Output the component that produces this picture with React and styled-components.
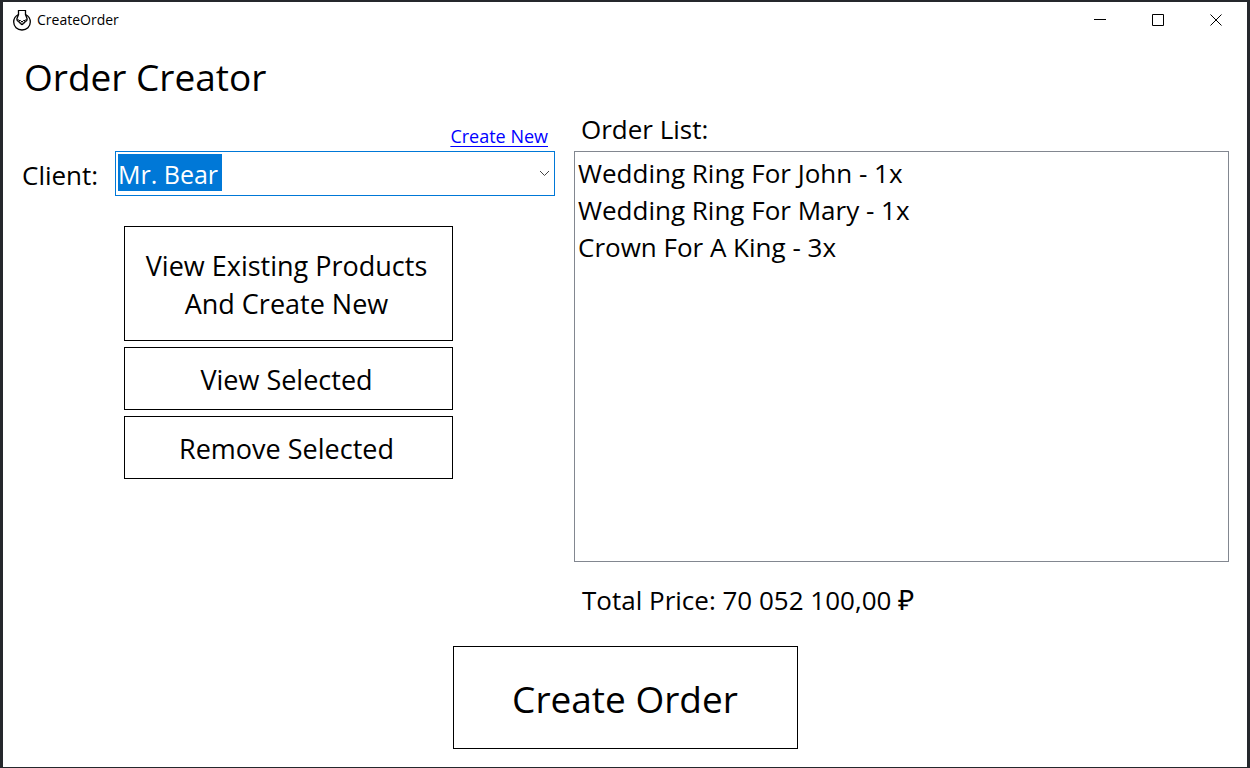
import React, { useState } from "react";
import styled, { createGlobalStyle } from "styled-components";

const GlobalStyle = createGlobalStyle`
  * { box-sizing: border-box; }
  body {
    margin: 0;
    background: #25282c;
    color: #000;
    font-family: "Open Sans", "Noto Sans", sans-serif;
    font-size: 26px;
    line-height: 37px;
  }
`;

const Desktop = styled.div`
  display: flex;
  min-height: 100vh;
  padding: 2px 3px 1px;
`;

const Window = styled.div`
  flex: 1;
  display: flex;
  flex-direction: column;
  background: #fff;
`;

const TitleBar = styled.header`
  display: flex;
  align-items: center;
  height: 36px;
  padding: 0 2px 0 10px;
  font-size: 14px;
  line-height: 20px;
`;

const AppName = styled.span`
  flex: 1;
  padding-left: 6px;
`;

const WindowButton = styled.button`
  display: flex;
  align-items: center;
  justify-content: center;
  width: 58px;
  height: 36px;
  padding: 0;
  border: 0;
  background: transparent;
  &:hover { background: #e5e5e5; }
`;

const Heading = styled.h1`
  margin: 12px 0 0;
  padding-left: 21px;
  font-size: 37px;
  font-weight: 400;
  line-height: 54px;
`;

const Content = styled.main`
  display: grid;
  grid-template-columns: 552px minmax(0, 1fr);
  column-gap: 19px;
  flex: 1;
  padding-right: 18px;
`;

const Column = styled.section`
  display: flex;
  flex-direction: column;
`;

const LinkRow = styled.div`
  display: flex;
  justify-content: flex-end;
  height: 47px;
  padding: 18px 7px 0 0;
`;

const CreateLink = styled.a`
  color: #0000ff;
  font-size: 18px;
  line-height: 28px;
  text-decoration-thickness: 1px;
  text-underline-offset: 3px;
`;

const Field = styled.div`
  display: flex;
  align-items: center;
`;

const FieldLabel = styled.label`
  width: 112px;
  padding: 4px 0 0 19px;
`;

const ComboBox = styled.div`
  display: grid;
  flex: 1;
  align-items: center;
  > * { grid-area: 1 / 1; }
  > svg { justify-self: end; margin-right: 5px; pointer-events: none; }
`;

const ComboSelect = styled.select`
  appearance: none;
  width: 100%;
  height: 45px;
  padding: 2px 24px 0 2px;
  border: 1px solid #0078d7;
  border-radius: 0;
  outline: 0;
  background: linear-gradient(#0078d7, #0078d7) 2px 2px / 104px 37px no-repeat #fff;
  color: #fff;
  font: inherit;
  font-size: 25px;
  option { color: #000; }
`;

const Actions = styled.div`
  display: flex;
  flex-direction: column;
  gap: 6px;
  width: 329px;
  margin: 30px 0 0 121px;
`;

const Button = styled.button`
  padding: 13px 20px 11px 16px;
  border: 1px solid #000;
  background: #fff;
  color: #000;
  font: inherit;
  font-size: 27px;
  &:hover { background: #f2f2f2; }
`;

const TallButton = styled(Button)`
  padding-top: 20px;
  padding-bottom: 17px;
  line-height: 38px;
`;

const ListTitle = styled.h2`
  height: 47px;
  margin: 0;
  padding: 7px 0 0 7px;
  font-size: inherit;
  font-weight: 400;
`;

const OrderList = styled.ul`
  flex: 1;
  min-height: 300px;
  margin: 0;
  padding: 3px;
  border: 1px solid #828790;
  list-style: none;
`;

const Total = styled.p`
  margin: 0;
  padding: 20px 0 0 8px;
`;

const Currency = styled.span`
  font-family: "Liberation Sans", sans-serif;
  font-size: 28px;
`;

const Footer = styled.footer`
  display: flex;
  justify-content: center;
  padding: 27px 0 18px;
`;

const CreateButton = styled(Button)`
  width: 345px;
  padding: 24px 20px 22px;
  font-size: 37px;
  line-height: 55px;
`;

const items = [
  "Wedding Ring For John - 1x",
  "Wedding Ring For Mary - 1x",
  "Crown For A King - 3x",
];

function NecklaceIcon() {
  return (
    <svg width="18" height="22" viewBox="0 0 18 22" fill="none" stroke="#000" aria-hidden="true">
      <path d="M5 1.500h8" />
      <path d="M5.500 1v4.500C2.500 7 .7 9.500.7 13c0 4.500 3.500 8 8.300 8s8.300-3.500 8.300-8c0-3.500-1.800-6-4.800-7.500V1" strokeWidth="1.300" />
      <path d="M5.500 5.500L4 9.500M12.500 5.500L14 9.500" strokeWidth="1.300" />
      <path d="M4 9.500l2 2h1.500L9 13l1.500-1.500H12l2-2" />
      <path d="M4 9.500c-.4 1.800.5 2.800 2 2.800 0 1.400.8 1.900 1.700 1.700.2 1 .6 1.600 1.300 1.600s1.100-.6 1.300-1.600c.9.2 1.700-.3 1.700-1.700 1.500 0 2.400-1 2-2.800" strokeWidth="1.300" />
    </svg>
  );
}

function Glyph({ d, label }) {
  return (
    <WindowButton type="button" aria-label={label}>
      <svg width="12" height="12" viewBox="0 0 12 12" fill="none" stroke="#000">
        <path d={d} />
      </svg>
    </WindowButton>
  );
}

export default function App() {
  const [client, setClient] = useState("Mr. Bear");
  return (
    <>
      <GlobalStyle />
      <Desktop>
        <Window>
          <TitleBar>
            <NecklaceIcon />
            <AppName>CreateOrder</AppName>
            <Glyph label="Minimize" d="M0 5.5h12" />
            <Glyph label="Maximize" d="M.5.5h11v11H.5z" />
            <Glyph label="Close" d="M.5.5l11 11M11.500.5l-11 11" />
          </TitleBar>
          <Heading>Order Creator</Heading>
          <Content>
            <Column>
              <LinkRow>
                <CreateLink href="#new-client">Create New</CreateLink>
              </LinkRow>
              <Field>
                <FieldLabel htmlFor="client">Client:</FieldLabel>
                <ComboBox>
                  <ComboSelect id="client" value={client} onChange={(e) => setClient(e.target.value)}>
                    <option>Mr. Bear</option>
                  </ComboSelect>
                  <svg width="11" height="7" viewBox="0 0 11 7" fill="none" stroke="#444" aria-hidden="true">
                    <path d="M1 1l4.500 4.500L10 1" />
                  </svg>
                </ComboBox>
              </Field>
              <Actions>
                <TallButton type="button">View Existing Products And Create New</TallButton>
                <Button type="button">View Selected</Button>
                <Button type="button">Remove Selected</Button>
              </Actions>
            </Column>
            <Column>
              <ListTitle>Order List:</ListTitle>
              <OrderList aria-label="Order List">
                {items.map((item) => (
                  <li key={item}>{item}</li>
                ))}
              </OrderList>
              <Total>
                Total Price: 70 052 100,00 <Currency>₽</Currency>
              </Total>
            </Column>
          </Content>
          <Footer>
            <CreateButton type="button">Create Order</CreateButton>
          </Footer>
        </Window>
      </Desktop>
    </>
  );
}
